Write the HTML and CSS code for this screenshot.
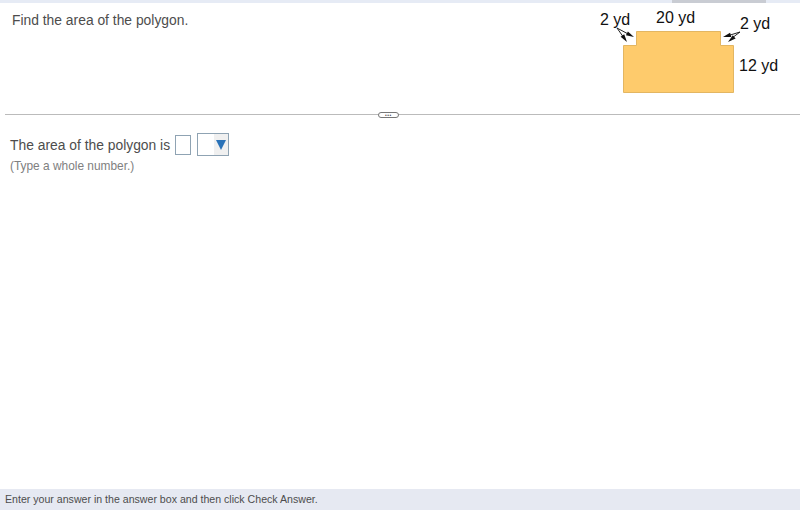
FILE: index.html

```html
<!doctype html>
<html lang="en">
<head>
  <meta charset="utf-8">
  <title>Find the area of the polygon</title>
  <link rel="stylesheet" href="styles.css">
</head>
<body>
  <div class="topstrip"><span class="topstrip-tab"></span></div>

  <main class="content">
    <!-- Question -->
    <section class="question">
      <p class="question-text">Find the area of the polygon.</p>
      <div class="figure">
        <svg class="figure-art" width="210" height="100" viewBox="0 0 210 100" aria-hidden="true">
          <path d="M33.5 45.5H46.500V31.500H130.500V45.500H143.500V92.500H33.500Z" fill="#fecb6c" stroke="#e3b662"/>
          <g stroke="#222" stroke-width="1" fill="none">
            <path d="M27 28L40 35"/>
            <path d="M27 28L34 38"/>
            <path d="M150 32L137 36"/>
            <path d="M150 32L142 38"/>
          </g>
          <g fill="#111">
            <path d="M44 37L35.900 35.200L37.900 31.400Z"/>
            <path d="M37 42L30.600 36.800L34.200 34.200Z"/>
            <path d="M133 37L141.300 36.900L140.100 32.700Z"/>
            <path d="M138 42L145.600 38.600L142.800 35.200Z"/>
          </g>
        </svg>
        <span class="dim dim-left">2 yd</span>
        <span class="dim dim-top">20 yd</span>
        <span class="dim dim-right">2 yd</span>
        <span class="dim dim-side">12 yd</span>
      </div>
    </section>

    <!-- Divider with handle -->
    <div class="divider"><span class="handle">•••</span></div>

    <!-- Answer -->
    <section class="answer">
      <div class="answer-line">
        <span>The area of the polygon is</span>
        <span class="box"></span>
        <span class="select"><span class="select-btn"><i class="arrow"></i></span></span>
      </div>
      <p class="hint">(Type a whole number.)</p>
    </section>
  </main>

  <footer class="statusbar">Enter your answer in the answer box and then click Check Answer.</footer>
</body>
</html>
```

FILE: styles.css

```css
* { box-sizing: border-box; }
html, body { height: 100%; }
body {
  margin: 0;
  height: 510px;
  display: flex;
  flex-direction: column;
  overflow: hidden;
  background: #fff;
  color: #4d4d4d;
  font: 13.850px/18px "Liberation Sans", Arial, sans-serif;
}

.topstrip { height: 3px; background: #e6ebf5; display: flex; justify-content: flex-end; padding-right: 34px; }
.topstrip-tab { width: 94px; background: #c9ccd3; }

.content { flex: 1; }

.question { height: 108px; display: flex; justify-content: space-between; padding-left: 12px; }
.question-text { margin: 8px 0 0; }

/* Figure: labels sit on a free canvas */
.figure { position: relative; width: 210px; height: 100px; margin-top: -3px; color: #111; font-size: 16px; }
.figure-art { display: block; }
.dim { position: absolute; line-height: 18px; white-space: nowrap; }
.dim-left { left: 10px; top: 11px; }
.dim-top { left: 66px; top: 9px; }
.dim-right { left: 150px; top: 15px; }
.dim-side { left: 149px; top: 57px; }

.divider { margin: 3px 0 0 5px; height: 1px; background: #bbb; display: flex; align-items: center; padding-left: 373px; }
.handle {
  width: 21px;
  height: 6px;
  flex: none;
  border: 1px solid #777;
  border-radius: 3px;
  background: #fff;
  color: #555;
  font-size: 5px;
  line-height: 4px;
  letter-spacing: .5px;
  text-align: center;
}

.answer { padding: 18px 0 0 10px; }
.answer-line { display: flex; align-items: center; height: 24px; }
.box { width: 16px; height: 20px; margin-left: 5px; border: 1px solid #8fa3b3; background: #fff; }
.select { align-self: flex-start; width: 32px; height: 23px; margin-left: 6px; border: 1px solid #8fa3b3; background: #fff; display: flex; justify-content: flex-end; }
.select-btn { width: 14px; background: #f0f0f0; display: flex; align-items: center; justify-content: center; }
.arrow { width: 0; height: 0; border-style: solid; border-width: 10px 5.500px 0; border-color: #2a72b8 transparent transparent; }
.hint { margin: 1px 0 0; color: #808080; font-size: 11.900px; line-height: 16px; }

.statusbar { height: 21px; padding-left: 5px; background: #e6e9f2; color: #4d4d4d; font-size: 10.600px; line-height: 20px; }
```
